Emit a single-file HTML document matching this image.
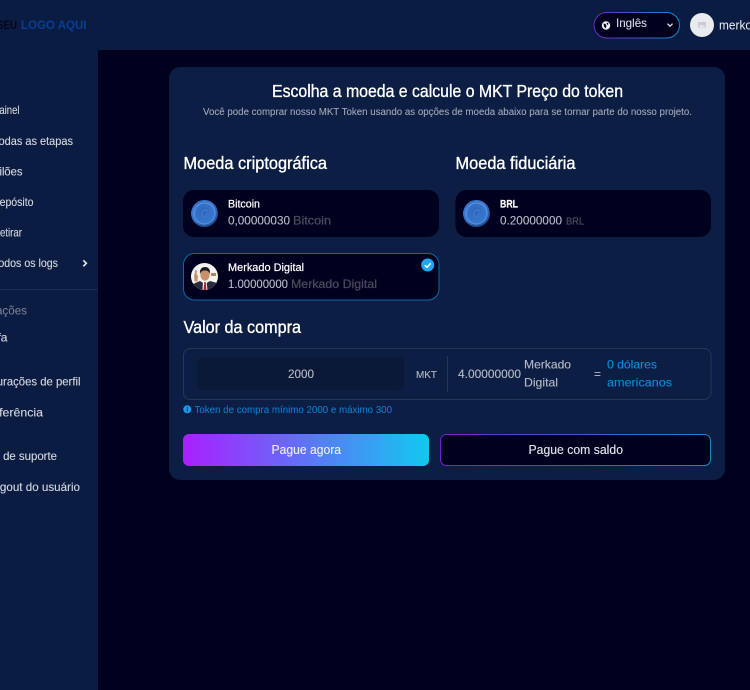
<!DOCTYPE html>
<html lang="pt"><head><meta charset="utf-8"><title>Comprar token</title>
<style>
html,body{margin:0;padding:0;background:#00001f;width:750px;height:690px;overflow:hidden}
svg{display:block}
text{font-family:"Liberation Sans",sans-serif;white-space:pre}
.s{font-size:12px;fill:#d5d8df;stroke:#d5d8df;stroke-width:.12}
.h{font-size:17.5px;fill:#fff;stroke:#fff;stroke-width:.35}
.v{font-size:12px;fill:#b6bac5;stroke:#b6bac5;stroke-width:.12}
.g{font-size:12px;fill:#4b4b5b;stroke:#4b4b5b;stroke-width:.25}
.n{font-size:11px;fill:#fff;stroke:#fff;stroke-width:.2}
.b{font-size:12px;fill:#0c8ddb;stroke:#0c8ddb;stroke-width:.1}
</style></head><body>
<svg xmlns="http://www.w3.org/2000/svg" width="750" height="690" viewBox="0 0 750 690">
<defs>
<linearGradient id="pay" x1="0" y1="0" x2="1" y2="0"><stop offset="0" stop-color="#ab1fff"/><stop offset="1" stop-color="#12c9ee"/></linearGradient>
<linearGradient id="bd" x1="0" y1="0" x2="1" y2="0"><stop offset="0" stop-color="#7a1fd0"/><stop offset="1" stop-color="#0f8fc8"/></linearGradient>
<linearGradient id="bd2" x1="0" y1="0" x2="1" y2="0"><stop offset="0" stop-color="#0b69a8"/><stop offset="1" stop-color="#0b69a8"/></linearGradient>
<radialGradient id="coin" cx=".45" cy=".42" r=".6"><stop offset="0" stop-color="#2c66bd"/><stop offset=".72" stop-color="#3a78cf"/><stop offset="1" stop-color="#17407f"/></radialGradient>
<clipPath id="av"><circle cx="204.5" cy="276.5" r="13.5"/></clipPath>
</defs>
<rect width="750" height="690" fill="#00001f"/>
<rect width="750" height="50" fill="#0b1c42"/>
<rect width="98" height="690" fill="#0b1c42"/>
<rect y="289" width="98" height="1" fill="#1d2e54"/>

<text x="-3" y="29" font-size="11.5" font-weight="700" fill="#03061a" textLength="20" lengthAdjust="spacingAndGlyphs">SEU</text>
<text x="21" y="29" font-size="11.5" font-weight="700" fill="#063f98" textLength="65.5" lengthAdjust="spacingAndGlyphs">LOGO AQUI</text>

<text class="s" x="-7" y="114" textLength="26.5" lengthAdjust="spacingAndGlyphs">Painel</text>
<text class="s" x="-7" y="145" textLength="80" lengthAdjust="spacingAndGlyphs">Todas as etapas</text>
<text class="s" x="-13" y="175.5" textLength="35.5" lengthAdjust="spacingAndGlyphs">Leilões</text>
<text class="s" x="-8" y="206" textLength="41.5" lengthAdjust="spacingAndGlyphs">Depósito</text>
<text class="s" x="-7" y="236.5" textLength="29" lengthAdjust="spacingAndGlyphs">Retirar</text>
<text class="s" x="-7" y="267" textLength="65" lengthAdjust="spacingAndGlyphs">Todos os logs</text>
<path d="M83.3 260.3l3 3-3 3" fill="none" stroke="#e4e6ea" stroke-width="1.7"/>
<text x="-48" y="314.5" font-size="11.500" fill="#7f8698" textLength="75" lengthAdjust="spacingAndGlyphs">Configurações</text>
<text class="s" x="-22" y="341.500" textLength="29.500" lengthAdjust="spacingAndGlyphs">Tarifa</text>
<text class="s" x="-36" y="385.500" textLength="116.500" lengthAdjust="spacingAndGlyphs">Configurações de perfil</text>
<text class="s" x="-32" y="416.500" textLength="75" lengthAdjust="spacingAndGlyphs">Transferência</text>
<text class="s" x="-35" y="460" textLength="92" lengthAdjust="spacingAndGlyphs">Bilhete de suporte</text>
<text class="s" x="-13" y="491" textLength="93" lengthAdjust="spacingAndGlyphs">Logout do usuário</text>

<rect x="594" y="12.500" width="85.500" height="25.500" rx="12.700" fill="#00001f" stroke="url(#bd)" stroke-width="1"/>
<circle cx="606" cy="25.500" r="4.200" fill="#eef0f4"/>
<path d="M603.500 23.500l2 .5 1 2-1 2.500-1.500-2zM607 22.500l1.500 1-.5 1.500-1.500-1z" fill="#00001f"/>
<text class="s" x="616" y="27" textLength="31" lengthAdjust="spacingAndGlyphs">Inglês</text>
<path d="M667.500 23.700l2.500 2.500 2.500-2.500" fill="none" stroke="#e4e6ea" stroke-width="1.300"/>
<circle cx="702" cy="25" r="12" fill="#e9ebef"/>
<rect x="698" y="22" width="8" height="6" fill="#c9ccd2"/>
<path d="M698.500 27.500l2.500-3 1.700 1.700 1.200-1 1.600 2.300z" fill="#e9ebef"/>
<text x="719" y="29.500" font-size="13" fill="#eceef2" textLength="33" lengthAdjust="spacingAndGlyphs">merko</text>

<rect x="169" y="67" width="556" height="413" rx="11" fill="#0c1e44"/>
<text class="h" x="272" y="97" textLength="351" lengthAdjust="spacingAndGlyphs">Escolha a moeda e calcule o MKT Preço do token</text>
<text x="203" y="115" font-size="10" fill="#a4a9b8" stroke="#a4a9b8" stroke-width=".08" textLength="489" lengthAdjust="spacingAndGlyphs">Você pode comprar nosso MKT Token usando as opções de moeda abaixo para se tornar parte do nosso projeto.</text>
<text class="h" x="183.500" y="169" textLength="143.500" lengthAdjust="spacingAndGlyphs">Moeda criptográfica</text>
<text class="h" x="455.500" y="169" textLength="120" lengthAdjust="spacingAndGlyphs">Moeda fiduciária</text>

<rect x="183" y="190" width="256" height="47" rx="11" fill="#00001f"/>
<rect x="455.500" y="190" width="255.500" height="47" rx="11" fill="#00001f"/>
<rect x="183.500" y="253.500" width="255.500" height="46.500" rx="11" fill="#00001f" stroke="url(#bd2)" stroke-width="1"/>

<circle cx="204.500" cy="213.500" r="13.500" fill="url(#coin)"/>
<circle cx="204.500" cy="213.500" r="10.500" fill="none" stroke="#6ba0e4" stroke-width="1" opacity=".8"/>
<text x="200.500" y="218" font-size="11.500" fill="#3f78cc" font-weight="700">G</text>
<circle cx="476.500" cy="213.500" r="13.500" fill="url(#coin)"/>
<circle cx="476.500" cy="213.500" r="10.500" fill="none" stroke="#6ba0e4" stroke-width="1" opacity=".8"/>
<text x="472.500" y="218" font-size="11.500" fill="#3f78cc" font-weight="700">G</text>

<circle cx="204.500" cy="276.500" r="13.500" fill="#f4f3f1"/>
<g clip-path="url(#av)">
<path d="M191 291l2-7 7-3 5 3 5-3 7 2 3 8z" fill="#2a2c3e"/>
<path d="M203 281h3.500l1 9h-5z" fill="#f2f2f2"/>
<path d="M204.300 282h1.400l.8 8h-3z" fill="#b8202c"/>
<ellipse cx="205" cy="275" rx="4.600" ry="5.600" fill="#c98f6b"/>
<path d="M200 274c-.6-5 2-7 5-7s5.600 2 5 7c-1-3-3-3.500-5-3.500s-4 .5-5 3.500z" fill="#1c1a1d"/>
<path d="M194 276l1.500-6 1.500.5-.5 4 1.500 1-.5 6h-3z" fill="#c98f6b"/>
<path d="M211 273h5v3h-5z" fill="#b08560"/>
</g>

<text class="n" x="228" y="207.500" textLength="32" lengthAdjust="spacingAndGlyphs">Bitcoin</text>
<text class="v" x="228" y="224.500" textLength="62" lengthAdjust="spacingAndGlyphs">0,00000030</text>
<text class="g" x="293" y="224.500" textLength="38" lengthAdjust="spacingAndGlyphs">Bitcoin</text>
<text class="n" x="228" y="271" textLength="76" lengthAdjust="spacingAndGlyphs">Merkado Digital</text>
<text class="v" x="228" y="288" textLength="60" lengthAdjust="spacingAndGlyphs">1.00000000</text>
<text class="g" x="291" y="288" textLength="86" lengthAdjust="spacingAndGlyphs">Merkado Digital</text>
<circle cx="427.700" cy="265" r="6.500" fill="#1ea8f4"/>
<path d="M424.800 265.200l2.100 2.100 3.800-4" fill="none" stroke="#fff" stroke-width="1.600"/>
<text class="n" x="500" y="207.500" font-weight="700" textLength="18" lengthAdjust="spacingAndGlyphs">BRL</text>
<text class="v" x="500" y="224.500" textLength="62" lengthAdjust="spacingAndGlyphs">0.20000000</text>
<text class="g" x="566" y="224.500" style="font-size:10.500px" textLength="18" lengthAdjust="spacingAndGlyphs">BRL</text>

<text class="h" x="183.500" y="333" textLength="117.500" lengthAdjust="spacingAndGlyphs">Valor da compra</text>
<rect x="183.500" y="348.500" width="527.500" height="51" rx="7" fill="none" stroke="#26375a"/>
<rect x="197" y="357" width="207" height="33.500" rx="6" fill="#0a1937"/>
<text class="v" x="288" y="378" textLength="26" lengthAdjust="spacingAndGlyphs">2000</text>
<text class="v" x="416" y="378" style="font-size:10.500px" textLength="21" lengthAdjust="spacingAndGlyphs">MKT</text>
<rect x="447" y="356" width="1" height="36" fill="#26375a"/>
<text class="v" x="458" y="378" textLength="63" lengthAdjust="spacingAndGlyphs">4.00000000</text>
<text class="v" x="524" y="368.500" textLength="47" lengthAdjust="spacingAndGlyphs">Merkado</text>
<text class="v" x="524" y="386.500" textLength="34" lengthAdjust="spacingAndGlyphs">Digital</text>
<text class="v" x="594" y="378" textLength="7" lengthAdjust="spacingAndGlyphs">=</text>
<text class="b" x="607" y="368.500" textLength="50" lengthAdjust="spacingAndGlyphs">0 dólares</text>
<text class="b" x="607" y="386.500" textLength="65" lengthAdjust="spacingAndGlyphs">americanos</text>

<circle cx="187.300" cy="409.300" r="4" fill="#1a9cec"/>
<rect x="186.800" y="408.500" width="1" height="3" fill="#0c1e44"/>
<rect x="186.800" y="406.800" width="1" height="1" fill="#0c1e44"/>
<text x="194.500" y="413" font-size="10" fill="#0a7fcf" stroke="#0a7fcf" stroke-width=".08" textLength="197.500" lengthAdjust="spacingAndGlyphs">Token de compra mínimo 2000 e máximo 300</text>

<rect x="183" y="434" width="246" height="32" rx="6" fill="url(#pay)"/>
<text x="271.500" y="454" font-size="12.500" fill="#f0edf8" stroke="#f0edf8" stroke-width=".12" textLength="69.500" lengthAdjust="spacingAndGlyphs">Pague agora</text>
<rect x="440.500" y="434.500" width="270" height="31" rx="6" fill="#00001f" stroke="url(#bd)"/>
<text x="528.500" y="454" font-size="12.500" fill="#e4e6ec" stroke="#e4e6ec" stroke-width=".12" textLength="94.500" lengthAdjust="spacingAndGlyphs">Pague com saldo</text>
</svg>
</body></html>
